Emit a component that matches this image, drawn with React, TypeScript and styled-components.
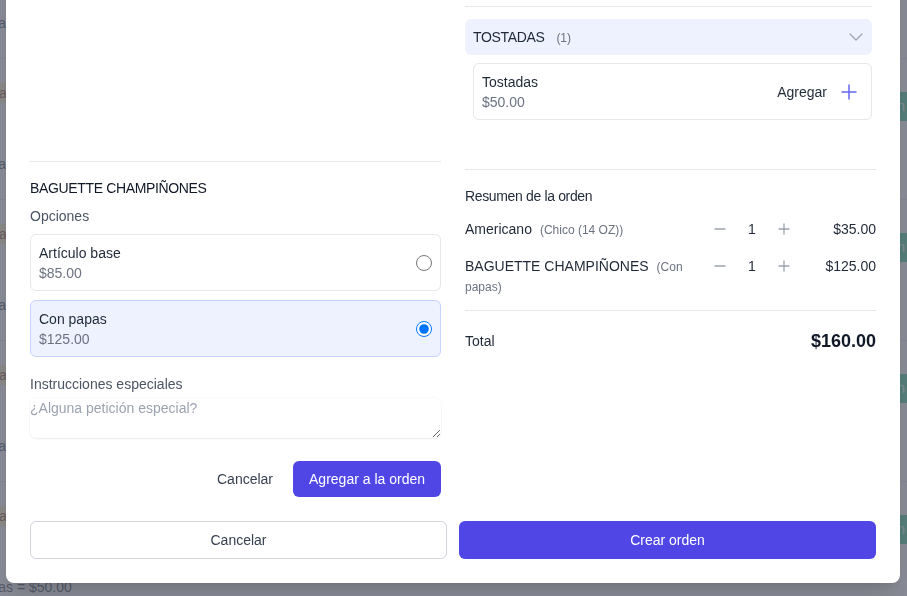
import React, { useState } from 'react';
import styled, { createGlobalStyle } from 'styled-components';
import { Plus, ChevronDown } from 'lucide-react';

const GlobalStyle = createGlobalStyle`
  * { box-sizing: border-box; }
  html, body { margin: 0; padding: 0; height: 100%; overflow: hidden; }
  body {
    font-family: 'Liberation Sans', Arial, sans-serif;
    background: #f3f4f6;
    color: #1f2937;
    font-size: 14px;
    line-height: 20px;
  }
`;

/* page behind the modal */
const OrdersPage = styled.div`
  margin: -83px 0 0 -43px;
  width: 976px;
`;

const OrderRow = styled.div`
  height: 141px;
  border-top: 1px solid #e5e7eb;
  background: #fff;
  display: flex;
  justify-content: space-between;
  align-items: flex-start;
  padding: 0 16px 0 0;
`;

const OrderInfo = styled.div`
  display: flex;
  flex-direction: column;
  align-items: flex-start;
`;

const StatusBadge = styled.span`
  margin-top: 24px;
  background: #fef3c7;
  color: #92400e;
  padding: 0 8px 0 0;
  border-radius: 4px;
`;

const OrderItems = styled.span`
  margin-top: 51px;
  color: #374151;
`;

const DoneButton = styled.span`
  margin-top: 33px;
  height: 29px;
  line-height: 29px;
  padding: 0 12px;
  background: #34c48c;
  color: #ecfdf5;
  border-radius: 4px;
`;

/* modal */
const Overlay = styled.div`
  position: fixed;
  inset: 0;
  background: rgba(96, 100, 114, 0.75);
  display: flex;
  justify-content: center;
  align-items: flex-end;
  padding: 0 7px 13px 6px;
`;

const Modal = styled.div`
  width: 100%;
  max-width: 894px;
  flex-shrink: 0;
  background: #fff;
  border-radius: 8px;
  box-shadow: 0 20px 25px -5px rgba(0, 0, 0, 0.1), 0 8px 10px -6px rgba(0, 0, 0, 0.1);
  padding: 24px;
`;

const Columns = styled.div`
  display: grid;
  grid-template-columns: 1fr 1fr;
  gap: 24px;
  align-items: start;
`;

const Column = styled.div`
  display: flex;
  flex-direction: column;
  min-width: 0;
`;

const MenuArea = styled.div`
  height: 200px;
`;

const ItemDetail = styled.div`
  border-top: 1px solid #e5e7eb;
  padding-top: 16px;
  display: flex;
  flex-direction: column;
`;

const ItemTitle = styled.h3`
  margin: 0;
  font-size: 14px;
  font-weight: 400;
  line-height: 20px;
  letter-spacing: -0.025em;
  color: #111827;
`;

const FieldLabel = styled.div<{ $top: number }>`
  margin-top: ${p => p.$top}px;
  color: #4b5563;
`;

const OptionList = styled.div`
  margin-top: 8px;
  display: flex;
  flex-direction: column;
  gap: 9px;
`;

const OptionCard = styled.label<{ $selected: boolean }>`
  display: flex;
  align-items: center;
  justify-content: space-between;
  height: 57px;
  padding: 0 8px;
  border-radius: 6px;
  border: 1px solid ${p => (p.$selected ? '#c7d2fe' : '#e5e7eb')};
  background: ${p => (p.$selected ? '#eef2ff' : '#fff')};
  cursor: pointer;
`;

const OptionName = styled.div`
  color: #1f2937;
`;

const Price = styled.div`
  color: #6b7280;
`;

const Radio = styled.input`
  width: 16px;
  height: 16px;
  margin: 0;
`;

const Notes = styled.textarea`
  display: block;
  margin-top: 4px;
  width: 100%;
  height: 40px;
  padding: 0;
  border: none;
  border-radius: 6px;
  box-shadow: 0 0 0 1px rgba(0, 0, 0, 0.02), 0 1px 2px rgba(0, 0, 0, 0.06);
  font: inherit;
  color: #1f2937;
  outline: none;

  &::placeholder {
    color: #9ca3af;
  }
`;

const DetailActions = styled.div`
  margin-top: 23px;
  display: flex;
  justify-content: flex-end;
  gap: 4px;
`;

const TextButton = styled.button`
  font: inherit;
  height: 36px;
  padding: 0 16px;
  border: none;
  background: none;
  color: #374151;
  cursor: pointer;
`;

const PrimaryButton = styled.button<{ $block?: boolean }>`
  font: inherit;
  font-weight: 500;
  height: ${p => (p.$block ? 38 : 36)}px;
  padding: 0 ${p => (p.$block ? 16 : 15)}px;
  border: 1px solid transparent;
  border-radius: 6px;
  background: #4f46e5;
  color: #fff;
  cursor: pointer;
`;

const OutlineButton = styled.button`
  font: inherit;
  height: 38px;
  border: 1px solid #d1d5db;
  border-radius: 6px;
  background: #fff;
  color: #374151;
  cursor: pointer;
`;

const MenuList = styled.div`
  padding-right: 4px;
  display: flex;
  flex-direction: column;
`;

const CategoryTop = styled.div`
  height: 46px;
  border-bottom: 1px solid #e5e7eb;
`;

const CategoryHeader = styled.div`
  margin-top: 12px;
  height: 36px;
  display: flex;
  align-items: center;
  justify-content: space-between;
  padding: 0 4px 0 8px;
  background: #eef2ff;
  border-radius: 6px;
  color: #9ca3af;
`;

const CategoryName = styled.span`
  letter-spacing: -0.025em;
  color: #1f2937;
`;

const CategoryCount = styled.span`
  margin-left: 12px;
  font-size: 12px;
  color: #6b7280;
`;

const MenuCard = styled.div`
  margin: 8px 0 0 8px;
  height: 57px;
  border: 1px solid #e5e7eb;
  border-radius: 6px;
  padding: 0 8px;
  display: flex;
  align-items: center;
  justify-content: space-between;
`;

const AddButton = styled.button`
  font: inherit;
  display: flex;
  align-items: center;
  gap: 10px;
  padding: 4px 2px 4px 8px;
  border: none;
  background: none;
  color: #1f2937;
  cursor: pointer;

  svg {
    color: #6366f1;
  }
`;

const Summary = styled.div`
  margin-top: 49px;
  border-top: 1px solid #e5e7eb;
  padding-top: 16px;
`;

const SummaryTitle = styled.div`
  color: #1f2937;
  letter-spacing: -0.025em;
  margin-bottom: 13px;
`;

const Lines = styled.div`
  display: flex;
  flex-direction: column;
  gap: 17px;
`;

const Line = styled.div`
  display: flex;
  align-items: flex-start;
`;

const LineName = styled.div`
  flex: 1;
  min-width: 0;
  padding-right: 12px;
  color: #1f2937;
`;

const LineOption = styled.span`
  margin-left: 8px;
  font-size: 12px;
  line-height: 16px;
  color: #6b7280;
`;

const Qty = styled.div`
  display: flex;
  align-items: center;
  height: 20px;
  gap: 8px;
`;

const QtyButton = styled.button`
  width: 20px;
  height: 20px;
  padding: 0;
  border: none;
  background: none;
  color: #9ca3af;
  display: flex;
  align-items: center;
  justify-content: center;
  cursor: pointer;
`;

const QtyValue = styled.span`
  width: 28px;
  text-align: center;
  color: #1f2937;
`;

const LinePrice = styled.div`
  width: 82px;
  text-align: right;
  color: #1f2937;
`;

const TotalRow = styled.div`
  margin-top: 14px;
  border-top: 1px solid #e5e7eb;
  padding-top: 16px;
  display: flex;
  justify-content: space-between;
  align-items: center;
  color: #1f2937;
`;

const TotalValue = styled.span`
  font-size: 18px;
  line-height: 28px;
  font-weight: 700;
  color: #111827;
`;

const Footer = styled.div`
  margin-top: 24px;
  display: grid;
  grid-template-columns: 1fr 1fr;
  gap: 12px;
`;

const QtyIcon = ({ plus }: { plus?: boolean }) => (
  <svg width="12" height="12" viewBox="0 0 12 12" fill="none" stroke="currentColor" strokeWidth="1.3" strokeLinecap="round">
    <path d="M1 6h10" />
    {plus && <path d="M6 1v10" />}
  </svg>
);

const options = [
  { id: 'base', name: 'Artículo base', price: '$85.00' },
  { id: 'papas', name: 'Con papas', price: '$125.00' }
];

const orderLines = [
  { id: 1, name: 'Americano', option: '(Chico (14 OZ))', qty: 1, price: '$35.00' },
  { id: 2, name: 'BAGUETTE CHAMPIÑONES', option: '(Con papas)', qty: 1, price: '$125.00' }
];

const backgroundOrders = [1, 2, 3, 4, 5];

const App = () => {
  const [selected, setSelected] = useState('papas');

  return (
    <>
      <GlobalStyle />
      <OrdersPage>
        {backgroundOrders.map(n => (
          <OrderRow key={n}>
            <OrderInfo>
              <StatusBadge>Preparando</StatusBadge>
              <OrderItems>Tostadas = $50.00</OrderItems>
            </OrderInfo>
            <DoneButton>Completar orden</DoneButton>
          </OrderRow>
        ))}
      </OrdersPage>

      <Overlay>
        <Modal>
          <Columns>
            <Column>
              <MenuArea />
              <ItemDetail>
                <ItemTitle>BAGUETTE CHAMPIÑONES</ItemTitle>
                <FieldLabel $top={8}>Opciones</FieldLabel>
                <OptionList>
                  {options.map(o => (
                    <OptionCard key={o.id} $selected={selected === o.id}>
                      <div>
                        <OptionName>{o.name}</OptionName>
                        <Price>{o.price}</Price>
                      </div>
                      <Radio
                        type="radio"
                        name="option"
                        checked={selected === o.id}
                        onChange={() => setSelected(o.id)}
                      />
                    </OptionCard>
                  ))}
                </OptionList>
                <FieldLabel $top={17}>Instrucciones especiales</FieldLabel>
                <Notes placeholder="¿Alguna petición especial?" />
                <DetailActions>
                  <TextButton>Cancelar</TextButton>
                  <PrimaryButton>Agregar a la orden</PrimaryButton>
                </DetailActions>
              </ItemDetail>
            </Column>

            <Column>
              <MenuList>
                <CategoryTop />
                <CategoryHeader>
                  <div>
                    <CategoryName>TOSTADAS</CategoryName>
                    <CategoryCount>(1)</CategoryCount>
                  </div>
                  <ChevronDown size={24} strokeWidth={1.2} />
                </CategoryHeader>
                <MenuCard>
                  <div>
                    <OptionName>Tostadas</OptionName>
                    <Price>$50.00</Price>
                  </div>
                  <AddButton>
                    Agregar
                    <Plus size={24} strokeWidth={1.5} />
                  </AddButton>
                </MenuCard>
              </MenuList>

              <Summary>
                <SummaryTitle>Resumen de la orden</SummaryTitle>
                <Lines>
                  {orderLines.map(l => (
                    <Line key={l.id}>
                      <LineName>
                        {l.name}
                        <LineOption>{l.option}</LineOption>
                      </LineName>
                      <Qty>
                        <QtyButton>
                          <QtyIcon />
                        </QtyButton>
                        <QtyValue>{l.qty}</QtyValue>
                        <QtyButton>
                          <QtyIcon plus />
                        </QtyButton>
                      </Qty>
                      <LinePrice>{l.price}</LinePrice>
                    </Line>
                  ))}
                </Lines>
                <TotalRow>
                  <span>Total</span>
                  <TotalValue>$160.00</TotalValue>
                </TotalRow>
              </Summary>
            </Column>
          </Columns>

          <Footer>
            <OutlineButton>Cancelar</OutlineButton>
            <PrimaryButton $block>Crear orden</PrimaryButton>
          </Footer>
        </Modal>
      </Overlay>
    </>
  );
};

export default App;
